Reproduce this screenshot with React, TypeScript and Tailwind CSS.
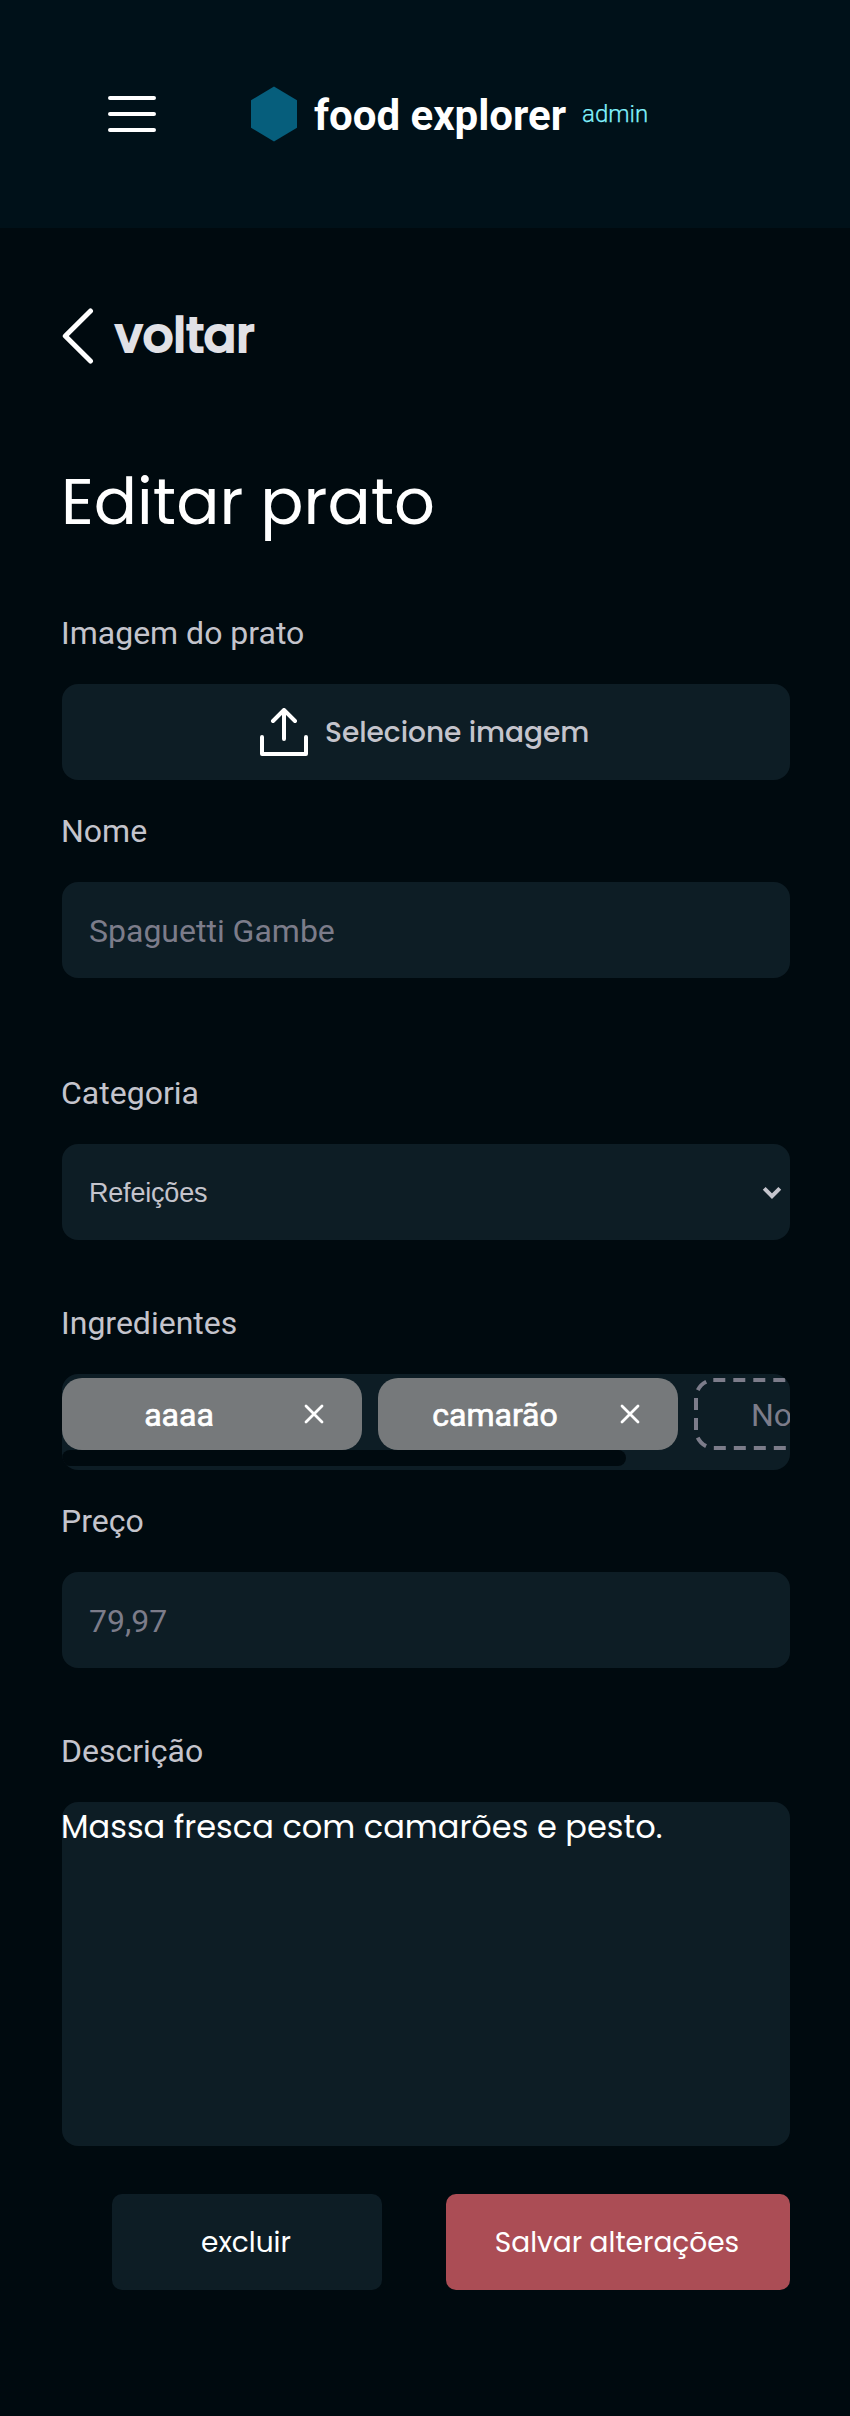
import type { ReactNode } from "react";

function Label({ children }: { children: ReactNode }) {
  return (
    <span className="-ml-px block h-[38px] font-[Roboto,sans-serif] text-[32px] leading-[38px] text-[#c4c4cc]">
      {children}
    </span>
  );
}

function Header() {
  return (
    <header className="flex h-[228px] items-center bg-[#001119] pl-[108px]">
      <button type="button" aria-label="Menu">
        <svg width="48" height="36" viewBox="0 0 48 36" fill="none" stroke="#fff" strokeWidth="4" strokeLinecap="round">
          <path d="M2 2H46M2 18H46M2 34H46" />
        </svg>
      </button>
      <svg className="ml-[95px] shrink-0" width="46" height="56" viewBox="0 0 46 56">
        <path d="M23 0.5L46 14.2V41.8L23 55.5L0 41.8V14.2Z" fill="#065e7c" />
      </svg>
      <h1 className="ml-[17px] pt-[3px] font-[Roboto,sans-serif] text-[42px] leading-[50px] font-bold text-white">
        food explorer
      </h1>
      <span className="ml-4 font-[Roboto,sans-serif] text-[24px] leading-[28px] font-light text-[#82f3ff] [-webkit-text-stroke:0.25px_#82f3ff]">
        admin
      </span>
    </header>
  );
}

function Chip({ name }: { name: string }) {
  return (
    <div className="flex h-[72px] w-[300px] shrink-0 items-center rounded-[20px] bg-[#76797b] pl-[32px] text-white">
      <span className="w-[170px] pt-[2px] text-center font-[Roboto,sans-serif] text-[32px] leading-[38px] font-normal [-webkit-text-stroke:0.7px_#fff]">
        {name}
      </span>
      <svg className="ml-[40px]" width="20" height="20" viewBox="0 0 20 20" stroke="currentColor" strokeWidth="2.8" strokeLinecap="round">
        <path d="M2 2L18 18M18 2L2 18" />
      </svg>
    </div>
  );
}

function Field({ label, children, className }: { label: string; children: ReactNode; className: string }) {
  return (
    <div className={className}>
      <Label>{label}</Label>
      <div className="mt-8">{children}</div>
    </div>
  );
}

function Placeholder({ children }: { children: ReactNode }) {
  return (
    <div className="flex h-24 items-center rounded-2xl bg-[#0d1d25] px-[27px] pt-px font-[Roboto,sans-serif] text-[32px] leading-[38px] text-[#7c7c8a]">
      {children}
    </div>
  );
}

export default function App() {
  return (
    <div className="min-h-[2416px] w-full bg-[#000a0f] font-[Poppins,Inter,sans-serif]">
      <Header />
      <main className="pr-[60px] pl-[62px]">
        <div className="flex h-[144px] items-center pt-[72px]">
          <svg width="32" height="56" viewBox="0 0 32 56" fill="none" stroke="#fff" strokeWidth="5" strokeLinecap="round" strokeLinejoin="round">
            <path d="M28.5 3L3.3 28L28.5 53" />
          </svg>
          <span className="ml-[21px] text-[48px] leading-[72px] font-medium text-[#e1e1e6] [-webkit-text-stroke:2px_#e1e1e6]">
            voltar
          </span>
        </div>
        <h2 className="mt-[85px] -ml-px h-[90px] text-[64px] leading-[90px] text-white">Editar prato</h2>

        <Field label="Imagem do prato" className="mt-[67px]">
          <button type="button" className="flex h-24 w-full items-center rounded-2xl bg-[#0d1d25] pl-[198px]">
            <svg width="48" height="48" viewBox="0 0 48 48" fill="none" stroke="#fff" strokeWidth="4" strokeLinecap="round" strokeLinejoin="round">
              <path d="M2 29V46H46V29M24 31V2M13 13L24 2L35 13" />
            </svg>
            <span className="ml-[17px] pt-[2px] text-[28px] leading-[42px] font-medium text-[#c4c4cc]">
              Selecione imagem
            </span>
          </button>
        </Field>

        <Field label="Nome" className="mt-8">
          <Placeholder>Spaguetti Gambe</Placeholder>
        </Field>

        <Field label="Categoria" className="mt-24">
          <div className="flex h-24 items-center justify-between rounded-2xl bg-[#0d1d25] pr-[8px] pl-[27px] text-[#c4c4cc]">
            <span className="pt-px font-['Liberation_Sans',sans-serif] text-[27px] leading-8 tracking-[-0.2px]">
              Refeições
            </span>
            <svg className="mt-[2px]" width="20" height="14" viewBox="0 0 20 14" fill="none" stroke="currentColor" strokeWidth="4">
              <path d="M2.2 2.4L10 10.2L17.8 2.4" />
            </svg>
          </div>
        </Field>

        <Field label="Ingredientes" className="mt-16">
          <div className="h-24 overflow-hidden rounded-2xl bg-[#0d1d25] pt-1">
            <div className="flex gap-4">
              <Chip name="aaaa" />
              <Chip name="camarão" />
              <div className="relative flex h-[72px] w-[300px] shrink-0 items-center pt-[2px] pl-[57px] font-[Roboto,sans-serif] text-[32px] leading-[38px] text-[#7c7c8a]">
                <svg className="absolute inset-0" width="300" height="72" viewBox="0 0 300 72" fill="none" stroke="currentColor" strokeWidth="4" strokeDasharray="12 8">
                  <path d="M19.3 2H280" />
                  <path d="M20 2A18 18 0 0 0 2 20V52A18 18 0 0 0 20 70H280" strokeDashoffset="12" />
                </svg>
                Novo
              </div>
            </div>
            <div className="h-4 w-[564px] rounded-lg bg-[#000a0f]" />
          </div>
        </Field>

        <Field label="Preço" className="mt-8">
          <Placeholder>79,97</Placeholder>
        </Field>

        <Field label="Descrição" className="mt-16">
          <div className="h-[344px] rounded-2xl bg-[#0d1d25] pt-px text-[32px] leading-[48px] text-white">
            <p className="-ml-px">Massa fresca com camarões e pesto.</p>
          </div>
        </Field>

        <div className="mt-12 flex h-24 justify-end gap-16 text-[28px] leading-[42px] text-white">
          <button type="button" className="w-[270px] rounded-[10px] bg-[#0d1d25] pt-[2px] pr-[2px]">
            excluir
          </button>
          <button type="button" className="w-[344px] rounded-[10px] bg-[#ab4d55] pt-[2px] pr-[2px]">
            Salvar alterações
          </button>
        </div>
      </main>
    </div>
  );
}
